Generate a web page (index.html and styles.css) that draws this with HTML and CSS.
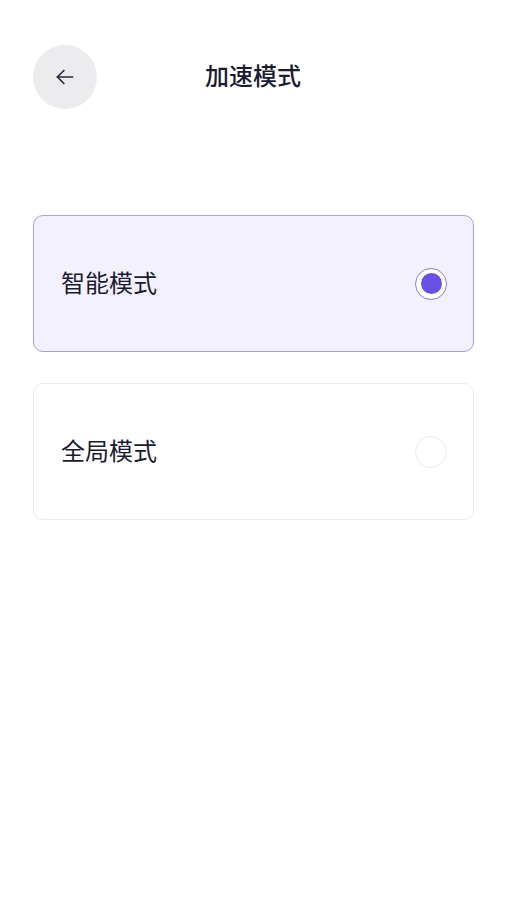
FILE: index.html
```html
<!DOCTYPE html>
<html lang="zh">
<head>
<meta charset="utf-8">
<link rel="stylesheet" href="styles.css">
</head>
<body>
<div class="page">
  <header class="header">
    <button class="back" aria-label="返回">
      <svg width="26" height="26" viewBox="0 0 24 24" fill="none" stroke="#2a2a3a" stroke-width="1.6" stroke-linecap="round" stroke-linejoin="round">
        <path d="M19 12H5"/>
        <path d="M11 6l-6 6 6 6"/>
      </svg>
    </button>
    <h1 class="title">加速模式</h1>
  </header>
  <main class="options">
    <div class="option selected">
      <span class="label">智能模式</span>
      <span class="radio checked"></span>
    </div>
    <div class="option">
      <span class="label">全局模式</span>
      <span class="radio"></span>
    </div>
  </main>
</div>
</body>
</html>
```

FILE: styles.css
```css
* { box-sizing: border-box; }
html, body { margin: 0; padding: 0; background: #ffffff; }
body {
  font-family: "Noto Sans CJK SC", "Noto Sans", sans-serif;
  color: #1b1b33;
}
.page {
  width: 506px;
  height: 900px;
  padding: 45px 32px 0 33px;
}
.header {
  position: relative;
  height: 64px;
  display: flex;
  align-items: center;
}
.back {
  width: 64px;
  height: 64px;
  border-radius: 50%;
  border: none;
  background: #ececef;
  display: flex;
  align-items: center;
  justify-content: center;
  padding: 0;
}
.title {
  position: absolute;
  left: 0;
  right: 0;
  top: 0;
  bottom: 0;
  margin: 0 0 0 -1px;
  padding-bottom: 5px;
  display: flex;
  align-items: center;
  justify-content: center;
  font-size: 24px;
  line-height: 1;
  font-weight: 500;
  pointer-events: none;
  color: #1b1b33;
}
.options {
  margin-top: 106px;
  display: flex;
  flex-direction: column;
  gap: 31px;
}
.option {
  height: 137px;
  border: 1px solid #ececf0;
  border-radius: 10px;
  background: #ffffff;
  display: flex;
  align-items: center;
  justify-content: space-between;
  padding: 0 26px 0 27px;
}
.option.selected {
  background: #f4f1fe;
  border: 1.5px solid #a99cf0;
}
.label {
  font-size: 24px;
  line-height: 1;
  padding-bottom: 3px;
  font-weight: 400;
  color: #1b1b33;
}
.radio {
  width: 32px;
  height: 32px;
  border-radius: 50%;
  border: 1.5px solid #ececf0;
  background: #ffffff;
  display: flex;
  align-items: center;
  justify-content: center;
}
.radio.checked {
  border-color: #8a7ae8;
}
.radio.checked::after {
  content: "";
  width: 21px;
  height: 21px;
  border-radius: 50%;
  background: #6a50e4;
}
```
